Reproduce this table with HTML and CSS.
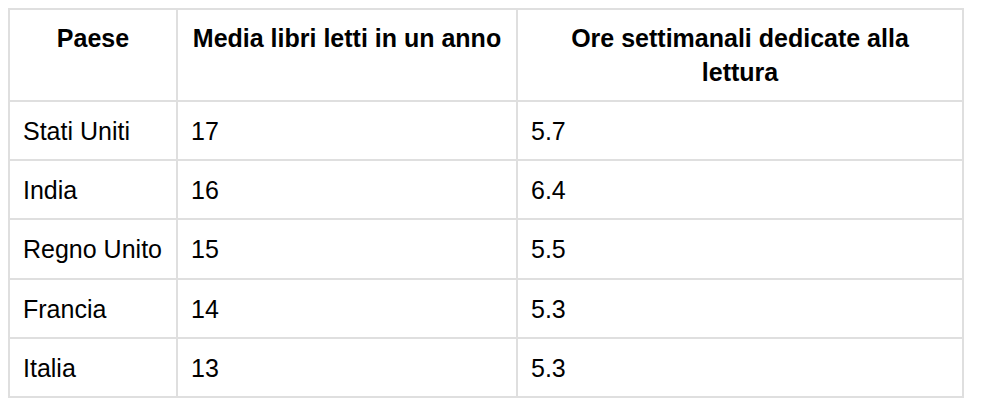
FILE: index.html
```html
<!DOCTYPE html>
<html lang="it">
<head>
<meta charset="utf-8">
<link rel="stylesheet" href="styles.css">
<title>Lettura</title>
</head>
<body>
<table class="data">
  <colgroup>
    <col class="c1">
    <col class="c2">
    <col class="c3">
  </colgroup>
  <thead>
    <tr>
      <th>Paese</th>
      <th>Media libri letti in un anno</th>
      <th>Ore settimanali dedicate alla lettura</th>
    </tr>
  </thead>
  <tbody>
    <tr><td>Stati Uniti</td><td>17</td><td>5.7</td></tr>
    <tr><td>India</td><td>16</td><td>6.4</td></tr>
    <tr><td>Regno Unito</td><td>15</td><td>5.5</td></tr>
    <tr><td>Francia</td><td>14</td><td>5.3</td></tr>
    <tr><td>Italia</td><td>13</td><td>5.3</td></tr>
  </tbody>
</table>
</body>
</html>
```
FILE: styles.css
```css
html, body {
  background: #ffffff;
}
body {
  margin: 8px;
  font-family: "Liberation Sans", Arial, sans-serif;
  color: #000000;
}
.data {
  border-collapse: collapse;
  table-layout: fixed;
  width: 954px;
  font-size: 25px;
  line-height: 34px;
}
.c1 { width: 168px; }
.c2 { width: 340px; }
.c3 { width: 446px; }
.data th,
.data td {
  border: 2px solid #dfdfdf;
  padding: 11px 13px 11px 13px;
}
.data th {
  font-weight: bold;
  text-align: center;
  vertical-align: top;
}
.data td {
  text-align: left;
  vertical-align: middle;
  padding-top: 12px;
  padding-bottom: 11.2px;
}
```
